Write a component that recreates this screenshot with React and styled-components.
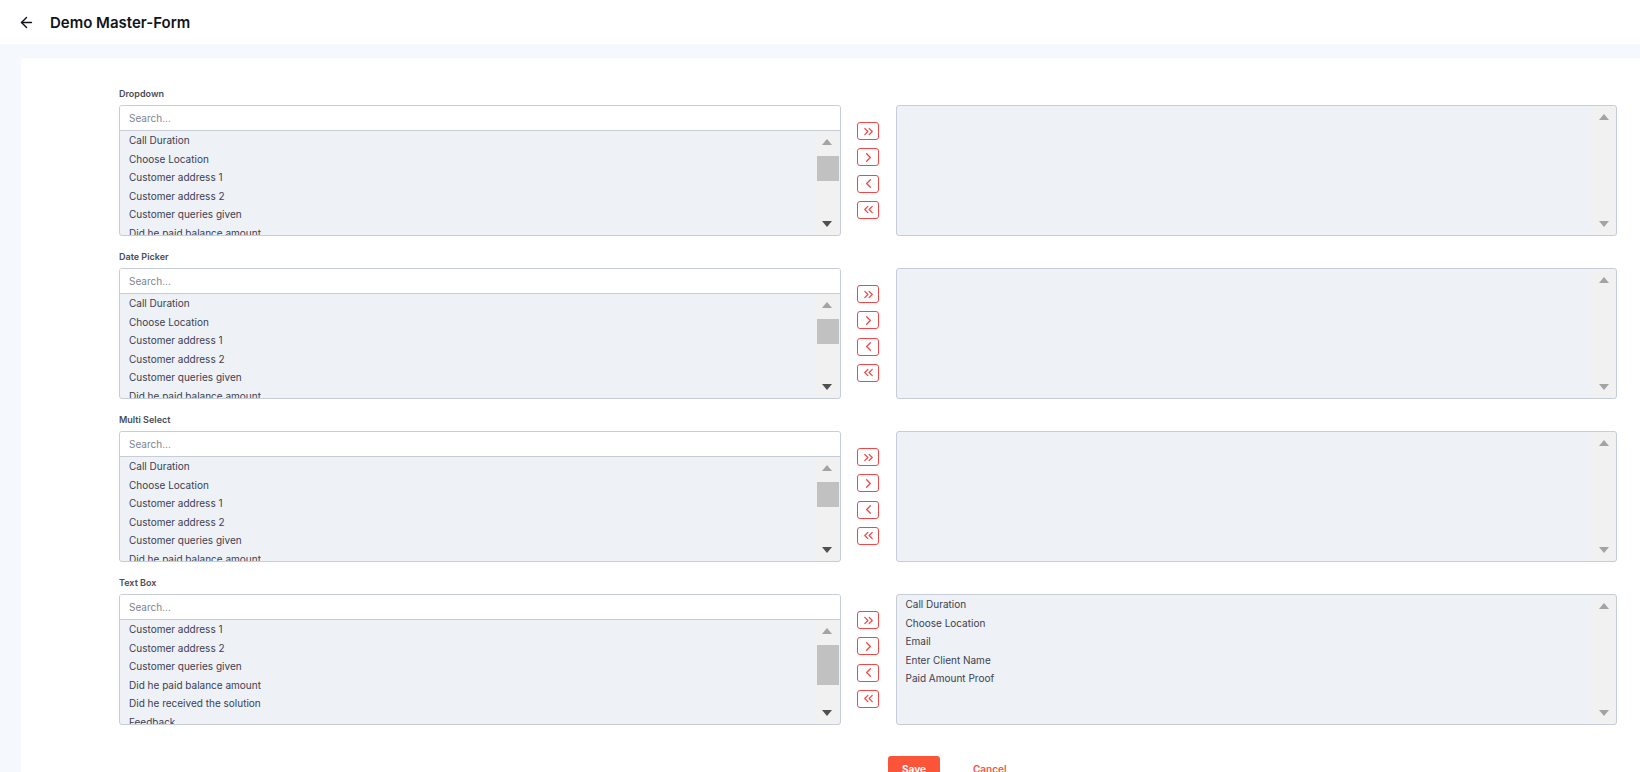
import React from 'react';
import styled, { createGlobalStyle } from 'styled-components';
import { ArrowLeft, ChevronsRight, ChevronRight, ChevronLeft, ChevronsLeft } from 'lucide-react';

const GlobalStyle = createGlobalStyle`
    * { box-sizing: border-box; }
    html, body {
        margin: 0;
        padding: 0;
        background: #ffffff;
        font-family: Inter, "Noto Sans", "Liberation Sans", sans-serif;
        overflow: hidden;
    }
`;

const Header = styled.header`
    height: 44px;
    display: flex;
    align-items: center;
    gap: 15px;
    padding-left: 18px;
    background: #ffffff;
    color: #111318;
`;

const Title = styled.h1`
    margin: 0;
    font-size: 15px;
    font-weight: 600;
`;

const Main = styled.main`
    background: #f5f8fc;
    padding: 14px 0 0 21px;
    min-height: calc(100vh - 44px);
`;

const Card = styled.div`
    background: #ffffff;
    border-top-left-radius: 4px;
    padding: 30px 23px 40px 98px;
    min-height: calc(100vh - 58px);
`;

const Section = styled.section`
    margin-bottom: 15px;
`;

const Label = styled.div`
    font-size: 9px;
    line-height: 11px;
    font-weight: 600;
    color: #4a4d55;
    margin-bottom: 6px;
`;

const Row = styled.div`
    display: grid;
    grid-template-columns: 1fr 22px 1fr;
    column-gap: 16.5px;
    align-items: center;
`;

const Box = styled.div`
    height: 131px;
    border: 1px solid #c6ccd8;
    border-radius: 3px;
    display: flex;
    flex-direction: column;
    overflow: hidden;
    background: #eef1f6;
`;

const Search = styled.input`
    height: 25px;
    flex: none;
    border: none;
    border-bottom: 1px solid #c6ccd8;
    background: #ffffff;
    padding: 0 9px;
    font-family: inherit;
    font-size: 10px;
    color: #333;
    outline: none;
    &::placeholder { color: #80858f; }
`;

const ListArea = styled.div`
    flex: 1;
    display: flex;
    min-height: 0;
`;

const Items = styled.ul`
    flex: 1;
    list-style: none;
    margin: 0;
    padding: 0;
    overflow: hidden;
`;

const Item = styled.li`
    padding: 0 9px;
    height: 18.5px;
    line-height: 18.5px;
    font-size: 10px;
    color: #3b4050;
    white-space: nowrap;
`;

const Track = styled.div`
    width: 23px;
    flex: none;
    margin-right: 1px;
    background: #f1f1f1;
    display: flex;
    flex-direction: column;
`;

const ArrowCell = styled.div`
    height: 22px;
    flex: none;
    display: flex;
    align-items: center;
    justify-content: center;
    &::after {
        content: '';
        width: 0;
        height: 0;
        border-left: 5.5px solid transparent;
        border-right: 5.5px solid transparent;
        ${({ $dir, $active }) =>
            $dir === 'up'
                ? `border-bottom: 6px solid ${$active ? '#505050' : '#a3a3a3'};`
                : `border-top: 6px solid ${$active ? '#505050' : '#a3a3a3'};`}
    }
`;

const Gutter = styled.div`
    flex: 1;
    padding: 3px 0 0 1px;
`;

const Thumb = styled.div`
    height: ${({ $size }) => $size}px;
    background: #c1c1c1;
`;

const Controls = styled.div`
    display: flex;
    flex-direction: column;
    gap: 8.3px;
`;

const MoveButton = styled.button`
    width: 22px;
    height: 18px;
    padding: 0;
    border: 1px solid #f04848;
    border-radius: 3px;
    background: #ffffff;
    color: #f04848;
    display: flex;
    align-items: center;
    justify-content: center;
    cursor: pointer;
`;

const Footer = styled.div`
    display: flex;
    align-items: center;
    gap: 17px;
    padding: 16px 0 0 769px;
`;

const SaveButton = styled.button`
    height: 25px;
    padding: 0 14px;
    border: none;
    border-radius: 3px;
    background: #fb5539;
    color: #ffffff;
    font-family: inherit;
    font-size: 10px;
    font-weight: 700;
`;

const CancelButton = styled.button`
    height: 25px;
    padding: 0 16px;
    border: none;
    background: transparent;
    color: #f0574a;
    font-family: inherit;
    font-size: 10px;
    font-weight: 600;
`;

const allFields = [
    'Call Duration',
    'Choose Location',
    'Customer address 1',
    'Customer address 2',
    'Customer queries given',
    'Did he paid balance amount',
    'Did he received the solution',
    'Email',
    'Enter Client Name',
    'Feedback',
    'Paid Amount Proof',
    'Payment Mode',
    'Remarks',
];

const textBoxPicked = ['Call Duration', 'Choose Location', 'Email', 'Enter Client Name', 'Paid Amount Proof'];

const sections = [
    { label: 'Dropdown', left: allFields, right: [] },
    { label: 'Date Picker', left: allFields, right: [] },
    { label: 'Multi Select', left: allFields, right: [] },
    { label: 'Text Box', left: allFields.filter((f) => !textBoxPicked.includes(f)), right: textBoxPicked },
];

const ROW = 18.5;

const Scrollbar = ({ count, visible }) => {
    const content = count * ROW + 8;
    const scrollable = count * ROW > visible;
    const trackLen = visible - 44;
    const thumb = scrollable ? Math.round(trackLen * (visible / content)) : 0;
    return (
        <Track>
            <ArrowCell $dir="up" />
            <Gutter>{scrollable && <Thumb $size={thumb} />}</Gutter>
            <ArrowCell $dir="down" $active={scrollable} />
        </Track>
    );
};

// only the rows that can show (the last one cut in half) are drawn
const FieldList = ({ items, visible }) => {
    const shown = items.slice(0, Math.ceil(visible / ROW));
    return (
        <ListArea>
            <Items>
                {shown.map((item) => (
                    <Item key={item}>{item}</Item>
                ))}
            </Items>
            <Scrollbar count={items.length} visible={visible} />
        </ListArea>
    );
};

const App = () => (
    <>
        <GlobalStyle />
        <Header>
            <ArrowLeft size={17} strokeWidth={2} />
            <Title>Demo Master-Form</Title>
        </Header>
        <Main>
            <Card>
                {sections.map((s) => (
                    <Section key={s.label}>
                        <Label>{s.label}</Label>
                        <Row>
                            <Box>
                                <Search placeholder="Search..." />
                                <FieldList items={s.left} visible={104} />
                            </Box>
                            <Controls>
                                <MoveButton><ChevronsRight size={15} strokeWidth={2} /></MoveButton>
                                <MoveButton><ChevronRight size={15} strokeWidth={2} /></MoveButton>
                                <MoveButton><ChevronLeft size={15} strokeWidth={2} /></MoveButton>
                                <MoveButton><ChevronsLeft size={15} strokeWidth={2} /></MoveButton>
                            </Controls>
                            <Box>
                                <FieldList items={s.right} visible={129} />
                            </Box>
                        </Row>
                    </Section>
                ))}
                <Footer>
                    <SaveButton>Save</SaveButton>
                    <CancelButton>Cancel</CancelButton>
                </Footer>
            </Card>
        </Main>
    </>
);

export default App;
